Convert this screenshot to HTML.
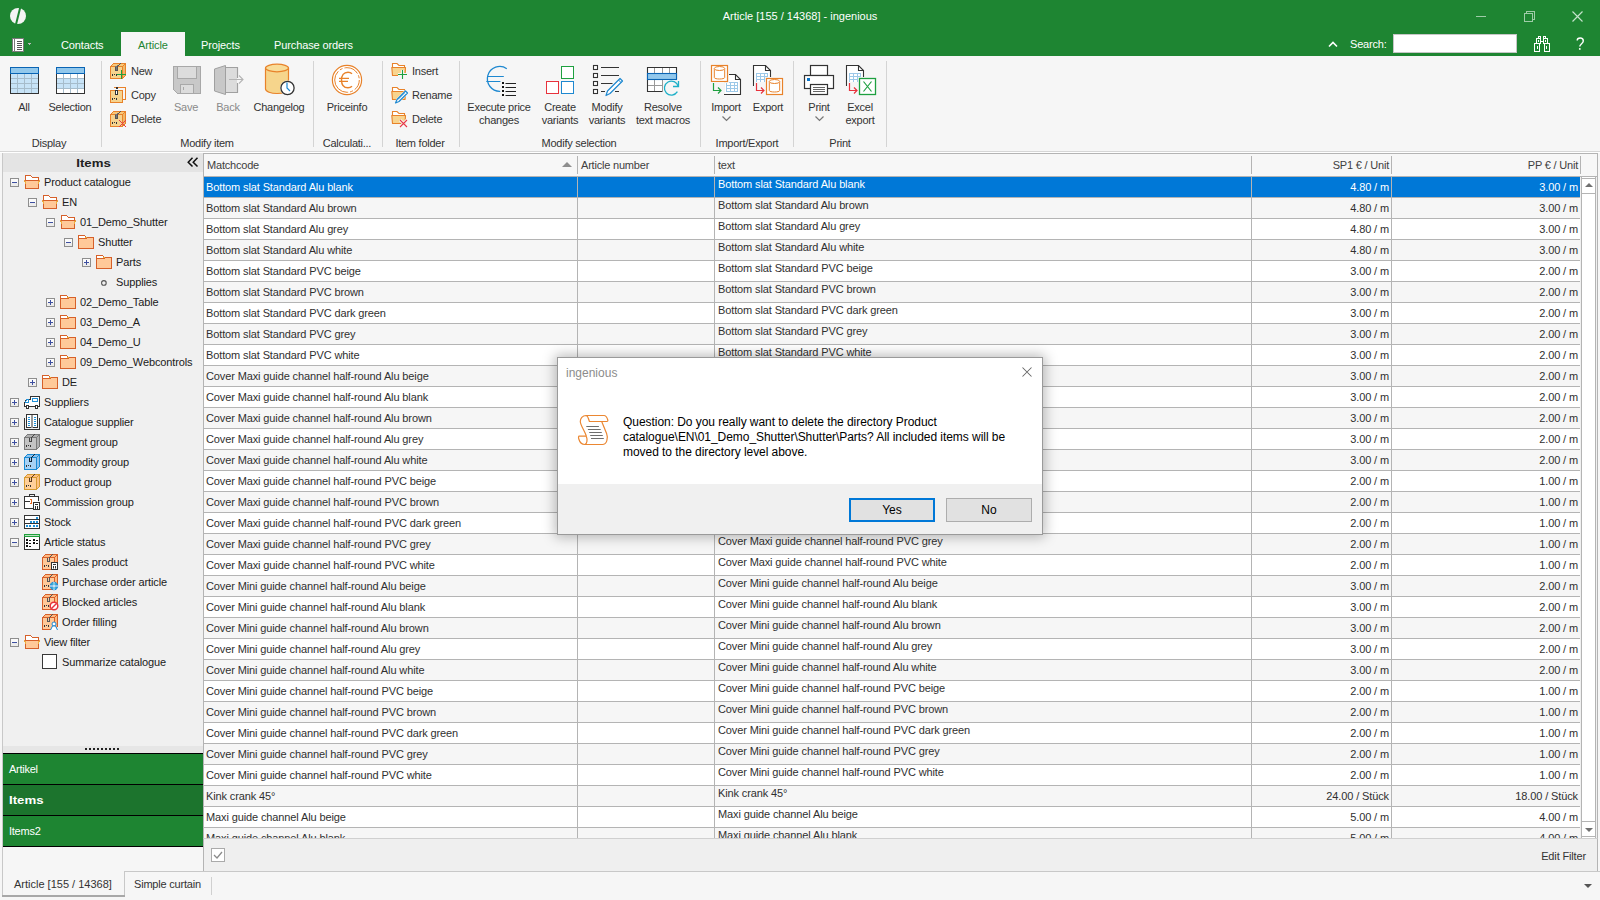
<!DOCTYPE html><html><head><meta charset="utf-8"><style>
html,body{margin:0;padding:0;width:1600px;height:900px;overflow:hidden;background:#f6f6f6;position:relative;font-family:"Liberation Sans",sans-serif}
.t{position:absolute;white-space:nowrap;font-size:11px;line-height:14px;color:#333;letter-spacing:-0.25px}
.w{color:#fff}
.g{color:#8a8a8a}
.k{color:#202020}
svg{overflow:visible}
</style></head><body>
<div style="position:absolute;left:0px;top:0px;width:1600px;height:56px;background:#1e8532"></div>
<svg style="position:absolute;left:8px;top:6px" width="20" height="20" viewBox="0 0 20 20"><circle cx="10" cy="10" r="8" fill="#f4f4f4"/><path d="M11.2 1.5 L13.2 1.8 L9.0 18.6 L7.0 18.3 Z" fill="#1e8532"/></svg>
<div class="t w" style="left:650.0px;width:300px;text-align:center;top:9px;letter-spacing:0">Article [155 / 14368] - ingenious</div>
<div style="position:absolute;left:1476px;top:16px;width:10px;height:1px;background:#9fcca8"></div>
<svg style="position:absolute;left:1524px;top:11px" width="11" height="11" viewBox="0 0 11 11" shape-rendering="crispEdges"><rect x="0.5" y="2.5" width="8" height="8" fill="none" stroke="#9fcca8"/><path d="M2.5 2.5V0.5H10.5V8.5H8.5" fill="none" stroke="#9fcca8"/></svg>
<svg style="position:absolute;left:1572px;top:11px" width="11" height="11" viewBox="0 0 11 11"><path d="M0.5 0.5L10.5 10.5M10.5 0.5L0.5 10.5" stroke="#c4e2cb" stroke-width="1.15"/></svg>
<svg style="position:absolute;left:12px;top:38px" width="20" height="14" viewBox="0 0 20 14" shape-rendering="crispEdges"><rect x="0.5" y="0.5" width="11" height="13" fill="#fff" stroke="#7a7a7a"/><rect x="2" y="1" width="1" height="12" fill="#7a7a7a"/><path d="M5 3h5M5 5h5M5 7h5M5 9h5M5 11h5" stroke="#555" stroke-width="1"/><path d="M15 5h4l-2 2z" fill="#bbb"/></svg>
<div style="position:absolute;left:121px;top:32px;width:64px;height:24px;background:#f6f6f6"></div>
<div class="t w" style="left:61px;top:38px;letter-spacing:-0.12px">Contacts</div>
<div class="t " style="left:138px;top:38px;color:#1e8532;letter-spacing:-0.12px">Article</div>
<div class="t w" style="left:201px;top:38px;letter-spacing:-0.12px">Projects</div>
<div class="t w" style="left:274px;top:38px;letter-spacing:-0.12px">Purchase orders</div>
<svg style="position:absolute;left:1328px;top:41px" width="10" height="6" viewBox="0 0 10 6"><path d="M1 5.5L5 1.5L9 5.5" fill="none" stroke="#fff" stroke-width="1.6"/></svg>
<div class="t w" style="left:1350px;top:37px;letter-spacing:-0.2px">Search:</div>
<div style="position:absolute;left:1393px;top:34px;width:124px;height:19px;background:#fff;box-sizing:border-box;border:1px solid #c6c6c6"></div>
<svg style="position:absolute;left:1534px;top:36px" width="16" height="16" viewBox="0 0 16 16" shape-rendering="crispEdges"><g fill="none" stroke="#fff"><rect x="4.5" y="0.5" width="2" height="2"/><rect x="9.5" y="0.5" width="2" height="2"/><rect x="2.5" y="2.5" width="4" height="5"/><rect x="9.5" y="2.5" width="4" height="5"/><rect x="0.5" y="7.5" width="5" height="8"/><rect x="10.5" y="7.5" width="5" height="8"/></g><g fill="#fff"><rect x="4" y="4" width="1" height="2"/><rect x="11" y="4" width="1" height="2"/><rect x="3" y="10" width="1" height="3"/><rect x="12" y="10" width="1" height="3"/><rect x="7" y="5" width="2" height="1"/></g></svg>
<svg style="position:absolute;left:1570px;top:34px" width="20" height="20" viewBox="1570 34 20 20"><path d="M1577.2 40.6 C1577.2 38.6 1578.6 38 1580.2 38 C1582 38 1583.3 39.2 1583.3 41 C1583.3 43.6 1579.8 43.8 1579.8 46.6" fill="none" stroke="#fff" stroke-width="1.4"/><circle cx="1579.8" cy="48.9" r="0.95" fill="#fff"/></svg>
<div style="position:absolute;left:0px;top:151px;width:1600px;height:1px;background:#d6d6d6"></div>
<div style="position:absolute;left:0px;top:152px;width:1600px;height:1px;background:#ffffff"></div>
<div style="position:absolute;left:101px;top:61px;width:1px;height:86px;background:#d4d4d4"></div>
<div style="position:absolute;left:313px;top:61px;width:1px;height:86px;background:#d4d4d4"></div>
<div style="position:absolute;left:382px;top:61px;width:1px;height:86px;background:#d4d4d4"></div>
<div style="position:absolute;left:459px;top:61px;width:1px;height:86px;background:#d4d4d4"></div>
<div style="position:absolute;left:700px;top:61px;width:1px;height:86px;background:#d4d4d4"></div>
<div style="position:absolute;left:793px;top:61px;width:1px;height:86px;background:#d4d4d4"></div>
<div style="position:absolute;left:886px;top:61px;width:1px;height:86px;background:#d4d4d4"></div>
<div class="t " style="left:-51.0px;width:200px;text-align:center;top:136px;">Display</div>
<div class="t " style="left:107.0px;width:200px;text-align:center;top:136px;">Modify item</div>
<div class="t " style="left:247.0px;width:200px;text-align:center;top:136px;">Calculati...</div>
<div class="t " style="left:320.0px;width:200px;text-align:center;top:136px;">Item folder</div>
<div class="t " style="left:479.0px;width:200px;text-align:center;top:136px;">Modify selection</div>
<div class="t " style="left:647.0px;width:200px;text-align:center;top:136px;">Import/Export</div>
<div class="t " style="left:740.0px;width:200px;text-align:center;top:136px;">Print</div>
<div class="t " style="left:-76.0px;width:200px;text-align:center;top:100px;">All</div>
<div class="t " style="left:-30.0px;width:200px;text-align:center;top:100px;">Selection</div>
<div class="t g" style="left:86.0px;width:200px;text-align:center;top:100px;">Save</div>
<div class="t g" style="left:128.0px;width:200px;text-align:center;top:100px;">Back</div>
<div class="t " style="left:179.0px;width:200px;text-align:center;top:100px;">Changelog</div>
<div class="t " style="left:247.0px;width:200px;text-align:center;top:100px;">Priceinfo</div>
<div class="t " style="left:399.0px;width:200px;text-align:center;top:100px;">Execute price</div>
<div class="t " style="left:399.0px;width:200px;text-align:center;top:113px;">changes</div>
<div class="t " style="left:460.0px;width:200px;text-align:center;top:100px;">Create</div>
<div class="t " style="left:460.0px;width:200px;text-align:center;top:113px;">variants</div>
<div class="t " style="left:507.0px;width:200px;text-align:center;top:100px;">Modify</div>
<div class="t " style="left:507.0px;width:200px;text-align:center;top:113px;">variants</div>
<div class="t " style="left:563.0px;width:200px;text-align:center;top:100px;">Resolve</div>
<div class="t " style="left:563.0px;width:200px;text-align:center;top:113px;">text macros</div>
<div class="t " style="left:626.0px;width:200px;text-align:center;top:100px;">Import</div>
<div class="t " style="left:668.0px;width:200px;text-align:center;top:100px;">Export</div>
<div class="t " style="left:719.0px;width:200px;text-align:center;top:100px;">Print</div>
<div class="t " style="left:760.0px;width:200px;text-align:center;top:100px;">Excel</div>
<div class="t " style="left:760.0px;width:200px;text-align:center;top:113px;">export</div>
<svg style="position:absolute;left:722px;top:116px" width="9" height="5" viewBox="0 0 9 5"><path d="M0.5 0.5L4.5 4.5L8.5 0.5" fill="none" stroke="#777" stroke-width="1.2"/></svg>
<svg style="position:absolute;left:815px;top:116px" width="9" height="5" viewBox="0 0 9 5"><path d="M0.5 0.5L4.5 4.5L8.5 0.5" fill="none" stroke="#777" stroke-width="1.2"/></svg>
<div class="t " style="left:131px;top:64px;">New</div>
<div class="t " style="left:131px;top:88px;">Copy</div>
<div class="t " style="left:131px;top:112px;">Delete</div>
<div class="t " style="left:412px;top:64px;">Insert</div>
<div class="t " style="left:412px;top:88px;">Rename</div>
<div class="t " style="left:412px;top:112px;">Delete</div>
<svg style="position:absolute;left:10px;top:67px" width="29" height="27" viewBox="0 0 29 27" shape-rendering="crispEdges"><rect x="0.5" y="0.5" width="28" height="26" fill="#fff" stroke="#333"/><rect x="1" y="7" width="27" height="4" fill="#c7e3f7"/><rect x="1" y="11" width="27" height="5" fill="#c7e3f7"/><rect x="1" y="16" width="27" height="5" fill="#c7e3f7"/><rect x="1" y="21" width="27" height="5" fill="#c7e3f7"/><path d="M7.5 7V26M14.5 7V26M21.5 7V26M1 11.5H28M1 16.5H28M1 21.5H28" stroke="#a6bccb" stroke-width="1"/><path d="M0.5 6.5V26.5H28.5V6.5" fill="none" stroke="#333"/><rect x="0.5" y="0.5" width="28" height="6" fill="#92c8ec" stroke="#0a64b4"/></svg>
<svg style="position:absolute;left:56px;top:67px" width="29" height="27" viewBox="0 0 29 27" shape-rendering="crispEdges"><rect x="0.5" y="0.5" width="28" height="26" fill="#fff" stroke="#333"/><rect x="1" y="11" width="27" height="5" fill="#c7e3f7"/><rect x="1" y="16" width="27" height="5" fill="#c7e3f7"/><path d="M7.5 7V26M14.5 7V26M21.5 7V26M1 11.5H28M1 16.5H28M1 21.5H28" stroke="#a6bccb" stroke-width="1"/><path d="M0.5 6.5V26.5H28.5V6.5" fill="none" stroke="#333"/><rect x="0.5" y="0.5" width="28" height="6" fill="#92c8ec" stroke="#0a64b4"/></svg>
<svg style="position:absolute;left:110px;top:63px" width="16" height="16" viewBox="0 0 16 16" shape-rendering="crispEdges"><path d="M0.5 3.5L3.5 0.5H15.5L12.5 3.5Z" fill="#f8c87a" stroke="#e8822a"/><path d="M12.5 3.5L15.5 0.5V12.5L12.5 15.5Z" fill="#f0b868" stroke="#e8822a"/><rect x="0.5" y="3.5" width="12" height="12" fill="#f6d38e" stroke="#e8822a"/><path d="M5.5 3.5V7.5H7.5V3.5L10.5 0.5" fill="#777" stroke="#555"/><path d="M2.5 11v2M4.5 10.5v1M6.5 11v2" stroke="#333"/><rect x="7" y="7" width="10" height="10" fill="#f6f6f6" opacity="0"/><path d="M7 11.5H16M11.5 7V16" stroke="#1ea040" stroke-width="1.1"/></svg>
<svg style="position:absolute;left:110px;top:87px" width="16" height="16" viewBox="0 0 16 16" shape-rendering="crispEdges"><path d="M3.5 0.5H15.5V12.5H13" fill="none" stroke="#e8822a"/><rect x="0.5" y="3.5" width="12" height="12" fill="#f6d38e" stroke="#e8822a"/><rect x="5.5" y="3.5" width="2" height="4" fill="#fff" stroke="#333"/><rect x="6" y="0" width="2" height="2" fill="#333"/><path d="M2.5 11v2M4.5 10.5v1M6.5 11v2" stroke="#333"/></svg>
<svg style="position:absolute;left:110px;top:111px" width="16" height="16" viewBox="0 0 16 16" shape-rendering="crispEdges"><path d="M0.5 3.5L3.5 0.5H15.5L12.5 3.5Z" fill="#f8c87a" stroke="#e8822a"/><path d="M12.5 3.5L15.5 0.5V12.5L12.5 15.5Z" fill="#f0b868" stroke="#e8822a"/><rect x="0.5" y="3.5" width="12" height="12" fill="#f6d38e" stroke="#e8822a"/><path d="M5.5 3.5V7.5H7.5V3.5L10.5 0.5" fill="#777" stroke="#555"/><path d="M2.5 11v2M4.5 10.5v1M6.5 11v2" stroke="#333"/><path d="M9 9L16 16M16 9L9 16" stroke="#e83a48" stroke-width="1.1"/></svg>
<svg style="position:absolute;left:173px;top:66px" width="28" height="28" viewBox="0 0 28 28" shape-rendering="crispEdges"><path d="M0.5 0.5H27.5V27.5H4.5L0.5 23.5Z" fill="#c8c8c8" stroke="#a8a8a8"/><rect x="4.5" y="0.5" width="19" height="12" fill="#dcdcdc" stroke="#a8a8a8"/><rect x="7.5" y="18.5" width="13" height="9" fill="#dcdcdc" stroke="#a8a8a8"/><path d="M10.5 21v3" stroke="#a8a8a8"/></svg>
<svg style="position:absolute;left:213px;top:64px" width="32" height="32" viewBox="0 0 32 32"><path d="M1.5 5 L12.5 1.5 V30.5 L1.5 27 Z" fill="#c8c8c8" stroke="#a0a0a0" stroke-width="1"/><path d="M13 3.5H24.5V14M24.5 19V28.5H13" fill="#dcdcdc" stroke="#a0a0a0" stroke-width="1.1"/><rect x="13" y="4" width="11" height="24" fill="#dcdcdc"/><path d="M24.5 3.5V14M24.5 19V28.5" stroke="#a0a0a0" stroke-width="1.1"/><path d="M13 3.5H24.5M13 28.5H24.5" stroke="#a0a0a0" stroke-width="1.1"/><path d="M16 15.5H30M26 11.5L30 15.5L26 19.5" fill="none" stroke="#b4b4b4" stroke-width="1.1"/></svg>
<svg style="position:absolute;left:264px;top:63px" width="34" height="34" viewBox="0 0 34 34"><path d="M1.5 5 V26 C1.5 28.5 7 30.5 13 30.5 C19 30.5 24.5 28.5 24.5 26 V5" fill="#f6d58c" stroke="#e8822a" stroke-width="1.2"/><ellipse cx="13" cy="5" rx="11.5" ry="3.8" fill="#f8dc98" stroke="#e8822a" stroke-width="1.2"/><circle cx="23.5" cy="25" r="7.5" fill="#f6f6f6"/><circle cx="23.5" cy="25" r="6.6" fill="#fff" stroke="#333" stroke-width="1.3"/><path d="M23 19.5V25L26 28" fill="none" stroke="#1e88d0" stroke-width="1.2"/></svg>
<svg style="position:absolute;left:331px;top:64px" width="32" height="32" viewBox="0 0 32 32"><circle cx="16" cy="16" r="14.6" fill="#fff" stroke="#e8822a" stroke-width="1.2"/><circle cx="16" cy="16" r="12.3" fill="none" stroke="#e8822a" stroke-width="1" stroke-dasharray="15 2 3 2 30 2 3 2" stroke-dashoffset="4"/><path d="M21 9.8 C19.8 8.6 18.4 8.2 17 8.2 C12.6 8.2 10.5 11.6 10.5 16 C10.5 20.4 12.6 23.8 17 23.8 C18.4 23.8 19.8 23.4 21 22.2" fill="none" stroke="#e8822a" stroke-width="1.4"/><path d="M8 14.4H18M8 17.4H17" stroke="#e8822a" stroke-width="1.2"/></svg>
<svg style="position:absolute;left:391px;top:62px" width="18" height="18" viewBox="0 0 18 18"><path d="M1.5 6V1.5H6L8 3.5H13.5V6" fill="#fff" stroke="#e8822a" stroke-width="1.1"/><path d="M0.8 5.5H14.5L14 13.5H1.5Z" fill="#f8d48e" stroke="#e8822a" stroke-width="1.1" stroke-linejoin="round"/><path d="M7 12.5H16M11.5 8V17" stroke="#f6f6f6" stroke-width="3"/><path d="M7 12.5H16M11.5 8V17" stroke="#1ea040" stroke-width="1.1"/></svg>
<svg style="position:absolute;left:391px;top:86px" width="18" height="18" viewBox="0 0 18 18"><path d="M1.5 6V1.5H6L8 3.5H13.5V6" fill="#fff" stroke="#e8822a" stroke-width="1.1"/><path d="M0.8 5.5H14.5L14 13.5H1.5Z" fill="#f8d48e" stroke="#e8822a" stroke-width="1.1" stroke-linejoin="round"/><path d="M4.5 17 L6 13.5 L14.5 5 L16.5 7 L8 15.5 Z" fill="#f6f6f6" stroke="#f6f6f6" stroke-width="2"/><path d="M4.5 17 L6 13.5 L14.5 5 L16.5 7 L8 15.5 Z" fill="#fff" stroke="#1e88d0" stroke-width="1.2" stroke-linejoin="round"/><path d="M7 13.5L13.5 7" stroke="#1e88d0" stroke-width="0.8"/></svg>
<svg style="position:absolute;left:391px;top:110px" width="18" height="18" viewBox="0 0 18 18"><path d="M1.5 6V1.5H6L8 3.5H13.5V6" fill="#fff" stroke="#e8822a" stroke-width="1.1"/><path d="M0.8 5.5H14.5L14 13.5H1.5Z" fill="#f8d48e" stroke="#e8822a" stroke-width="1.1" stroke-linejoin="round"/><path d="M9 10L16 17M16 10L9 17" stroke="#f6f6f6" stroke-width="3"/><path d="M9 10L16 17M16 10L9 17" stroke="#e83a48" stroke-width="1.1"/></svg>
<svg style="position:absolute;left:482px;top:60px" width="40" height="40" viewBox="0 0 40 40"><path d="M24.8 8.7 A12.4 12.4 0 1 0 18.2 31.3" fill="none" stroke="#1e88d0" stroke-width="1.3"/><path d="M5.2 16.5H21.8M4.3 21.5H18.4" stroke="#1e88d0" stroke-width="1.2"/><rect x="19" y="21" width="17" height="16" fill="#f6f6f6"/><path d="M20 23h2M20 27h2M20 31h2M20 35h2" stroke="#111" stroke-width="2"/><path d="M23.5 23.5H34M23.5 27.5H34M23.5 31.5H34M23.5 35.5H34" stroke="#222" stroke-width="1.1"/></svg>
<svg style="position:absolute;left:546px;top:66px" width="29" height="29" viewBox="0 0 29 29" shape-rendering="crispEdges"><rect x="15.5" y="0.5" width="12" height="12" fill="#fff" stroke="#1ea040" stroke-width="1"/><rect x="0.5" y="15.5" width="12" height="12" fill="#fff" stroke="#e8323c"/><rect x="15.5" y="15.5" width="12" height="12" fill="#fff" stroke="#1e88d0"/></svg>
<svg style="position:absolute;left:588px;top:60px" width="40" height="40" viewBox="0 0 40 40"><g fill="#fff" stroke="#333" stroke-width="1.1"><rect x="5.5" y="5.5" width="4" height="4"/><rect x="5.5" y="13.5" width="4" height="4"/><rect x="5.5" y="21.5" width="4" height="4"/><rect x="5.5" y="29.5" width="4" height="4"/></g><path d="M13 7.5H31M13 15.5H31M13 23.5H24.5M13 31.5H17M27 31.5H31" stroke="#333" stroke-width="1.1"/><path d="M18 35.5 L19.5 31 L32 18.5 L34.5 21 L22 33.5 Z" fill="#fff" stroke="#1e88d0" stroke-width="1.2" stroke-linejoin="round"/><path d="M30.5 20L33 22.5" stroke="#1e88d0"/></svg>
<svg style="position:absolute;left:642px;top:60px" width="40" height="40" viewBox="0 0 40 40"><path d="M20.5 31.5H5.5V7.5H34.5V19" fill="#fff" stroke="#333" stroke-width="1.1"/><path d="M12.5 8V13M20.5 8V13M27.5 8V13M12.5 20V31M20.5 20V31M6 25.5H20.5" stroke="#999" stroke-width="1"/><rect x="5.5" y="13.5" width="29" height="6" fill="#92c8ec" stroke="#0a64b4" stroke-width="1.1"/><rect x="21" y="21" width="16" height="16" fill="#f6f6f6"/><path d="M35.4 31.7 A7 7 0 1 1 36.2 26.4" fill="none" stroke="#1eb0c8" stroke-width="1.3"/><path d="M36.5 21V26.5H31" fill="none" stroke="#1eb0c8" stroke-width="1.3"/></svg>
<svg style="position:absolute;left:706px;top:60px" width="40" height="40" viewBox="0 0 40 40"><path d="M17.5 14.5H29.5L34.5 19.5V34.5H17.5Z" fill="#fff" stroke="#333" stroke-width="1.1"/><path d="M29.5 14.5V19.5H34.5" fill="none" stroke="#333" stroke-width="1.1"/><rect x="20" y="22" width="12" height="10" fill="#fff"/><path d="M20 22.5H32M20 25.5H32M20 28.5H32M20 31.5H32M20.5 22V32M24.5 22V32M28.5 22V32M31.5 22V32" stroke="#9cc8e8" stroke-width="1"/><rect x="4" y="4" width="19" height="19" fill="#f6f6f6"/><rect x="5.5" y="5.5" width="16" height="16" fill="#fff" stroke="#e8822a" stroke-width="1.2"/><path d="M8.3 8.5V17.5C8.3 19.5 18.7 19.5 18.7 17.5V8.5" fill="#fff" stroke="#e8822a" stroke-width="1"/><ellipse cx="13.5" cy="8.5" rx="5.2" ry="2" fill="#fff" stroke="#e8822a" stroke-width="1"/><rect x="4" y="22" width="14" height="13" fill="#f6f6f6"/><path d="M7.5 23V30.5H15" fill="none" stroke="#1ea040" stroke-width="1.2"/><path d="M12 27.5L15 30.5L12 33.5" fill="none" stroke="#1ea040" stroke-width="1.2"/></svg>
<svg style="position:absolute;left:706px;top:60px" width="80" height="40" viewBox="0 0 80 40"><path d="M47.5 5.5H59.5L64.5 10.5V25.5H47.5Z" fill="#fff" stroke="#333" stroke-width="1.1"/><path d="M59.5 5.5V10.5H64.5" fill="none" stroke="#333" stroke-width="1.1"/><rect x="50" y="13" width="12" height="10" fill="#fff"/><path d="M50 13.5H62M50 16.5H62M50 19.5H62M50 22.5H62M50.5 13V23M54.5 13V23M58.5 13V23M61.5 13V23" stroke="#9cc8e8" stroke-width="1"/><rect x="59" y="17" width="19" height="19" fill="#f6f6f6"/><rect x="60.5" y="18.5" width="16" height="16" fill="#fff" stroke="#e8822a" stroke-width="1.2"/><path d="M63.3 21.5V30.5C63.3 32.5 73.7 32.5 73.7 30.5V21.5" fill="#fff" stroke="#e8822a" stroke-width="1"/><ellipse cx="68.5" cy="21.5" rx="5.2" ry="2" fill="#fff" stroke="#e8822a" stroke-width="1"/><rect x="48" y="22" width="11" height="13" fill="#f6f6f6"/><path d="M50.5 23V30.5H58" fill="none" stroke="#e8323c" stroke-width="1.2"/><path d="M55 27.5L58 30.5L55 33.5" fill="none" stroke="#e8323c" stroke-width="1.2"/></svg>
<svg style="position:absolute;left:800px;top:60px" width="40" height="40" viewBox="0 0 40 40"><rect x="10.5" y="5.5" width="17" height="10" fill="#fff" stroke="#333" stroke-width="1.2"/><rect x="4.5" y="15.5" width="29" height="13" fill="#fff" stroke="#333" stroke-width="1.2"/><rect x="10.5" y="24.5" width="17" height="10" fill="#fff" stroke="#333" stroke-width="1.2"/><path d="M13 27.5H25M13 29.5H25M13 31.5H25" stroke="#555" stroke-width="0.9"/><rect x="7" y="18" width="3" height="3" fill="#0a74c8"/></svg>
<svg style="position:absolute;left:800px;top:60px" width="80" height="40" viewBox="0 0 80 40"><path d="M46.5 5.5H58.5L63.5 10.5V25.5H46.5Z" fill="#fff" stroke="#333" stroke-width="1.1"/><path d="M58.5 5.5V10.5H63.5" fill="none" stroke="#333" stroke-width="1.1"/><rect x="49" y="13" width="12" height="10" fill="#fff"/><path d="M49 13.5H61M49 16.5H61M49 19.5H61M49 22.5H61M49.5 13V23M53.5 13V23M57.5 13V23M60.5 13V23" stroke="#9cc8e8" stroke-width="1"/><rect x="58" y="17" width="19" height="19" fill="#f6f6f6"/><rect x="59.5" y="18.5" width="16" height="16" fill="#fff" stroke="#1ea040" stroke-width="1.3"/><path d="M63.5 21.5L71.5 31.5M71.5 21.5L63.5 31.5" stroke="#1ea040" stroke-width="1.2"/><rect x="47" y="22" width="11" height="13" fill="#f6f6f6"/><path d="M49.5 23V30.5H57" fill="none" stroke="#e8323c" stroke-width="1.2"/><path d="M54 27.5L57 30.5L54 33.5" fill="none" stroke="#e8323c" stroke-width="1.2"/></svg>
<div style="position:absolute;left:2px;top:153px;width:201px;height:718px;background:#f0f0f0;border-left:1px solid #c8c8c8;box-sizing:border-box"></div>
<div style="position:absolute;left:3px;top:153px;width:200px;height:19px;background:#e4e4e4"></div>
<div class="t" style="left:3px;width:181px;text-align:center;top:156px;font-weight:bold;color:#202020;letter-spacing:0;transform:scaleX(1.2)">Items</div>
<svg style="position:absolute;left:187px;top:157px" width="12" height="11" viewBox="0 0 12 11"><path d="M5.5 0.8L1.2 5.2L5.5 9.6M10.5 0.8L6.2 5.2L10.5 9.6" fill="none" stroke="#111" stroke-width="1.5"/></svg>
<svg style="position:absolute;left:10px;top:178px" width="9" height="9" viewBox="0 0 9 9" shape-rendering="crispEdges"><rect x="0.5" y="0.5" width="8" height="8" rx="1" fill="#fafafa" stroke="#8e8e8e"/><rect x="1" y="5" width="7" height="3" fill="#ececec"/><path d="M2 4.5h5" stroke="#3d4fa0" stroke-width="1"/></svg>
<svg style="position:absolute;left:24px;top:175px" width="16" height="14" viewBox="0 0 16 14" shape-rendering="crispEdges"><path d="M1.5 5.5V0.5H6.5L8.5 2.5H14.5V5.5" fill="#fff" stroke="#d6602a"/><rect x="1" y="5" width="14" height="9" fill="#ffc999"/><path d="M1.5 5.5H14.5V13.5H1.5Z" fill="none" stroke="#d6602a"/><rect x="0" y="5" width="1" height="2" fill="#e8a040"/><rect x="15" y="5" width="1" height="2" fill="#e8a040"/><rect x="1" y="6" width="1" height="3" fill="#f0b040"/><rect x="14" y="6" width="1" height="3" fill="#f0b040"/></svg>
<div class="t k" style="left:44px;top:175px;letter-spacing:-0.12px">Product catalogue</div>
<svg style="position:absolute;left:28px;top:198px" width="9" height="9" viewBox="0 0 9 9" shape-rendering="crispEdges"><rect x="0.5" y="0.5" width="8" height="8" rx="1" fill="#fafafa" stroke="#8e8e8e"/><rect x="1" y="5" width="7" height="3" fill="#ececec"/><path d="M2 4.5h5" stroke="#3d4fa0" stroke-width="1"/></svg>
<svg style="position:absolute;left:42px;top:195px" width="16" height="14" viewBox="0 0 16 14" shape-rendering="crispEdges"><path d="M1.5 5.5V0.5H6.5L8.5 2.5H14.5V5.5" fill="#fff" stroke="#d6602a"/><rect x="1" y="5" width="14" height="9" fill="#ffc999"/><path d="M1.5 5.5H14.5V13.5H1.5Z" fill="none" stroke="#d6602a"/><rect x="0" y="5" width="1" height="2" fill="#e8a040"/><rect x="15" y="5" width="1" height="2" fill="#e8a040"/><rect x="1" y="6" width="1" height="3" fill="#f0b040"/><rect x="14" y="6" width="1" height="3" fill="#f0b040"/></svg>
<div class="t k" style="left:62px;top:195px;letter-spacing:-0.12px">EN</div>
<svg style="position:absolute;left:46px;top:218px" width="9" height="9" viewBox="0 0 9 9" shape-rendering="crispEdges"><rect x="0.5" y="0.5" width="8" height="8" rx="1" fill="#fafafa" stroke="#8e8e8e"/><rect x="1" y="5" width="7" height="3" fill="#ececec"/><path d="M2 4.5h5" stroke="#3d4fa0" stroke-width="1"/></svg>
<svg style="position:absolute;left:60px;top:215px" width="16" height="14" viewBox="0 0 16 14" shape-rendering="crispEdges"><path d="M1.5 5.5V0.5H6.5L8.5 2.5H14.5V5.5" fill="#fff" stroke="#d6602a"/><rect x="1" y="5" width="14" height="9" fill="#ffc999"/><path d="M1.5 5.5H14.5V13.5H1.5Z" fill="none" stroke="#d6602a"/><rect x="0" y="5" width="1" height="2" fill="#e8a040"/><rect x="15" y="5" width="1" height="2" fill="#e8a040"/><rect x="1" y="6" width="1" height="3" fill="#f0b040"/><rect x="14" y="6" width="1" height="3" fill="#f0b040"/></svg>
<div class="t k" style="left:80px;top:215px;letter-spacing:-0.12px">01_Demo_Shutter</div>
<svg style="position:absolute;left:64px;top:238px" width="9" height="9" viewBox="0 0 9 9" shape-rendering="crispEdges"><rect x="0.5" y="0.5" width="8" height="8" rx="1" fill="#fafafa" stroke="#8e8e8e"/><rect x="1" y="5" width="7" height="3" fill="#ececec"/><path d="M2 4.5h5" stroke="#3d4fa0" stroke-width="1"/></svg>
<svg style="position:absolute;left:78px;top:235px" width="16" height="14" viewBox="0 0 16 14" shape-rendering="crispEdges"><path d="M0.5 13.5V0.5H6.5L8.5 2.5H15.5V13.5Z" fill="#ffc999" stroke="#d6602a"/><rect x="1" y="1" width="6" height="2" fill="#fff"/><path d="M0.5 3.5H8.5" stroke="#d6602a"/><rect x="7" y="2" width="2" height="1" fill="#e8b030"/></svg>
<div class="t k" style="left:98px;top:235px;letter-spacing:-0.12px">Shutter</div>
<svg style="position:absolute;left:82px;top:258px" width="9" height="9" viewBox="0 0 9 9" shape-rendering="crispEdges"><rect x="0.5" y="0.5" width="8" height="8" rx="1" fill="#fafafa" stroke="#8e8e8e"/><rect x="1" y="5" width="7" height="3" fill="#ececec"/><path d="M2 4.5h5" stroke="#3d4fa0" stroke-width="1"/><path d="M4.5 2v5" stroke="#3d4fa0" stroke-width="1"/></svg>
<svg style="position:absolute;left:96px;top:255px" width="16" height="14" viewBox="0 0 16 14" shape-rendering="crispEdges"><path d="M0.5 13.5V0.5H6.5L8.5 2.5H15.5V13.5Z" fill="#ffc999" stroke="#d6602a"/><rect x="1" y="1" width="6" height="2" fill="#fff"/><path d="M0.5 3.5H8.5" stroke="#d6602a"/><rect x="7" y="2" width="2" height="1" fill="#e8b030"/></svg>
<div class="t k" style="left:116px;top:255px;letter-spacing:-0.12px">Parts</div>
<svg style="position:absolute;left:101px;top:280px" width="7" height="7" viewBox="0 0 7 7"><circle cx="2.9" cy="2.9" r="2.3" fill="none" stroke="#555" stroke-width="1.1"/></svg>
<div class="t k" style="left:116px;top:275px;letter-spacing:-0.12px">Supplies</div>
<svg style="position:absolute;left:46px;top:298px" width="9" height="9" viewBox="0 0 9 9" shape-rendering="crispEdges"><rect x="0.5" y="0.5" width="8" height="8" rx="1" fill="#fafafa" stroke="#8e8e8e"/><rect x="1" y="5" width="7" height="3" fill="#ececec"/><path d="M2 4.5h5" stroke="#3d4fa0" stroke-width="1"/><path d="M4.5 2v5" stroke="#3d4fa0" stroke-width="1"/></svg>
<svg style="position:absolute;left:60px;top:295px" width="16" height="14" viewBox="0 0 16 14" shape-rendering="crispEdges"><path d="M0.5 13.5V0.5H6.5L8.5 2.5H15.5V13.5Z" fill="#ffc999" stroke="#d6602a"/><rect x="1" y="1" width="6" height="2" fill="#fff"/><path d="M0.5 3.5H8.5" stroke="#d6602a"/><rect x="7" y="2" width="2" height="1" fill="#e8b030"/></svg>
<div class="t k" style="left:80px;top:295px;letter-spacing:-0.12px">02_Demo_Table</div>
<svg style="position:absolute;left:46px;top:318px" width="9" height="9" viewBox="0 0 9 9" shape-rendering="crispEdges"><rect x="0.5" y="0.5" width="8" height="8" rx="1" fill="#fafafa" stroke="#8e8e8e"/><rect x="1" y="5" width="7" height="3" fill="#ececec"/><path d="M2 4.5h5" stroke="#3d4fa0" stroke-width="1"/><path d="M4.5 2v5" stroke="#3d4fa0" stroke-width="1"/></svg>
<svg style="position:absolute;left:60px;top:315px" width="16" height="14" viewBox="0 0 16 14" shape-rendering="crispEdges"><path d="M0.5 13.5V0.5H6.5L8.5 2.5H15.5V13.5Z" fill="#ffc999" stroke="#d6602a"/><rect x="1" y="1" width="6" height="2" fill="#fff"/><path d="M0.5 3.5H8.5" stroke="#d6602a"/><rect x="7" y="2" width="2" height="1" fill="#e8b030"/></svg>
<div class="t k" style="left:80px;top:315px;letter-spacing:-0.12px">03_Demo_A</div>
<svg style="position:absolute;left:46px;top:338px" width="9" height="9" viewBox="0 0 9 9" shape-rendering="crispEdges"><rect x="0.5" y="0.5" width="8" height="8" rx="1" fill="#fafafa" stroke="#8e8e8e"/><rect x="1" y="5" width="7" height="3" fill="#ececec"/><path d="M2 4.5h5" stroke="#3d4fa0" stroke-width="1"/><path d="M4.5 2v5" stroke="#3d4fa0" stroke-width="1"/></svg>
<svg style="position:absolute;left:60px;top:335px" width="16" height="14" viewBox="0 0 16 14" shape-rendering="crispEdges"><path d="M0.5 13.5V0.5H6.5L8.5 2.5H15.5V13.5Z" fill="#ffc999" stroke="#d6602a"/><rect x="1" y="1" width="6" height="2" fill="#fff"/><path d="M0.5 3.5H8.5" stroke="#d6602a"/><rect x="7" y="2" width="2" height="1" fill="#e8b030"/></svg>
<div class="t k" style="left:80px;top:335px;letter-spacing:-0.12px">04_Demo_U</div>
<svg style="position:absolute;left:46px;top:358px" width="9" height="9" viewBox="0 0 9 9" shape-rendering="crispEdges"><rect x="0.5" y="0.5" width="8" height="8" rx="1" fill="#fafafa" stroke="#8e8e8e"/><rect x="1" y="5" width="7" height="3" fill="#ececec"/><path d="M2 4.5h5" stroke="#3d4fa0" stroke-width="1"/><path d="M4.5 2v5" stroke="#3d4fa0" stroke-width="1"/></svg>
<svg style="position:absolute;left:60px;top:355px" width="16" height="14" viewBox="0 0 16 14" shape-rendering="crispEdges"><path d="M0.5 13.5V0.5H6.5L8.5 2.5H15.5V13.5Z" fill="#ffc999" stroke="#d6602a"/><rect x="1" y="1" width="6" height="2" fill="#fff"/><path d="M0.5 3.5H8.5" stroke="#d6602a"/><rect x="7" y="2" width="2" height="1" fill="#e8b030"/></svg>
<div class="t k" style="left:80px;top:355px;letter-spacing:-0.12px">09_Demo_Webcontrols</div>
<svg style="position:absolute;left:28px;top:378px" width="9" height="9" viewBox="0 0 9 9" shape-rendering="crispEdges"><rect x="0.5" y="0.5" width="8" height="8" rx="1" fill="#fafafa" stroke="#8e8e8e"/><rect x="1" y="5" width="7" height="3" fill="#ececec"/><path d="M2 4.5h5" stroke="#3d4fa0" stroke-width="1"/><path d="M4.5 2v5" stroke="#3d4fa0" stroke-width="1"/></svg>
<svg style="position:absolute;left:42px;top:375px" width="16" height="14" viewBox="0 0 16 14" shape-rendering="crispEdges"><path d="M0.5 13.5V0.5H6.5L8.5 2.5H15.5V13.5Z" fill="#ffc999" stroke="#d6602a"/><rect x="1" y="1" width="6" height="2" fill="#fff"/><path d="M0.5 3.5H8.5" stroke="#d6602a"/><rect x="7" y="2" width="2" height="1" fill="#e8b030"/></svg>
<div class="t k" style="left:62px;top:375px;letter-spacing:-0.12px">DE</div>
<svg style="position:absolute;left:10px;top:398px" width="9" height="9" viewBox="0 0 9 9" shape-rendering="crispEdges"><rect x="0.5" y="0.5" width="8" height="8" rx="1" fill="#fafafa" stroke="#8e8e8e"/><rect x="1" y="5" width="7" height="3" fill="#ececec"/><path d="M2 4.5h5" stroke="#3d4fa0" stroke-width="1"/><path d="M4.5 2v5" stroke="#3d4fa0" stroke-width="1"/></svg>
<svg style="position:absolute;left:24px;top:395px" width="16" height="14" viewBox="0 0 16 14" shape-rendering="crispEdges"><rect x="6.5" y="1.5" width="9" height="10" rx="1" fill="#fff" stroke="#333"/><rect x="8.5" y="3.5" width="5" height="3" fill="none" stroke="#1e90d8"/><path d="M6.5 4.5H2.5L0.5 8V11.5H6.5" fill="#fff" stroke="#333"/><path d="M1.5 7.5L2.5 4.5H4.5V7.5Z" fill="none" stroke="#1e90d8"/><circle cx="3.5" cy="12" r="1.5" fill="#fff" stroke="#333"/><circle cx="12.5" cy="12" r="1.5" fill="#fff" stroke="#333"/></svg>
<div class="t k" style="left:44px;top:395px;letter-spacing:-0.12px">Suppliers</div>
<svg style="position:absolute;left:10px;top:418px" width="9" height="9" viewBox="0 0 9 9" shape-rendering="crispEdges"><rect x="0.5" y="0.5" width="8" height="8" rx="1" fill="#fafafa" stroke="#8e8e8e"/><rect x="1" y="5" width="7" height="3" fill="#ececec"/><path d="M2 4.5h5" stroke="#3d4fa0" stroke-width="1"/><path d="M4.5 2v5" stroke="#3d4fa0" stroke-width="1"/></svg>
<svg style="position:absolute;left:24px;top:414px" width="16" height="16" viewBox="0 0 16 16" shape-rendering="crispEdges"><path d="M0.5 3.5V15.5H15.5V3.5" fill="none" stroke="#333"/><rect x="2.5" y="0.5" width="11" height="13" fill="#fff" stroke="#333"/><path d="M8 1V14" stroke="#999" stroke-width="2"/><path d="M4 3h2M4 5h2M4 7h2M4 9h2M4 11h2M10 3h2M10 5h2M10 7h2M10 9h2M10 11h2" stroke="#1e90d8"/></svg>
<div class="t k" style="left:44px;top:415px;letter-spacing:-0.12px">Catalogue supplier</div>
<svg style="position:absolute;left:10px;top:438px" width="9" height="9" viewBox="0 0 9 9" shape-rendering="crispEdges"><rect x="0.5" y="0.5" width="8" height="8" rx="1" fill="#fafafa" stroke="#8e8e8e"/><rect x="1" y="5" width="7" height="3" fill="#ececec"/><path d="M2 4.5h5" stroke="#3d4fa0" stroke-width="1"/><path d="M4.5 2v5" stroke="#3d4fa0" stroke-width="1"/></svg>
<svg style="position:absolute;left:24px;top:434px" width="16" height="16" viewBox="0 0 16 16" shape-rendering="crispEdges"><path d="M0.5 3.5L3.5 0.5H15.5L12.5 3.5Z" fill="#b0b0b0" stroke="#7a7a7a"/><path d="M12.5 3.5L15.5 0.5V12.5L12.5 15.5Z" fill="#b0b0b0" stroke="#7a7a7a"/><rect x="0.5" y="3.5" width="12" height="12" fill="#c4c4c4" stroke="#7a7a7a"/><path d="M5.5 3.5V7.5H7.5V3.5L10.5 0.5" fill="none" stroke="#444"/><path d="M2.5 11v2M4.5 10.5v1M6.5 11v2" stroke="#333" stroke-width="1"/></svg>
<div class="t k" style="left:44px;top:435px;letter-spacing:-0.12px">Segment group</div>
<svg style="position:absolute;left:10px;top:458px" width="9" height="9" viewBox="0 0 9 9" shape-rendering="crispEdges"><rect x="0.5" y="0.5" width="8" height="8" rx="1" fill="#fafafa" stroke="#8e8e8e"/><rect x="1" y="5" width="7" height="3" fill="#ececec"/><path d="M2 4.5h5" stroke="#3d4fa0" stroke-width="1"/><path d="M4.5 2v5" stroke="#3d4fa0" stroke-width="1"/></svg>
<svg style="position:absolute;left:24px;top:454px" width="16" height="16" viewBox="0 0 16 16" shape-rendering="crispEdges"><path d="M0.5 3.5L3.5 0.5H15.5L12.5 3.5Z" fill="#8cc2ee" stroke="#1a8ad4"/><path d="M12.5 3.5L15.5 0.5V12.5L12.5 15.5Z" fill="#8cc2ee" stroke="#1a8ad4"/><rect x="0.5" y="3.5" width="12" height="12" fill="#a8d2f4" stroke="#1a8ad4"/><path d="M5.5 3.5V7.5H7.5V3.5L10.5 0.5" fill="none" stroke="#123"/><path d="M2.5 11v2M4.5 10.5v1M6.5 11v2" stroke="#333" stroke-width="1"/></svg>
<div class="t k" style="left:44px;top:455px;letter-spacing:-0.12px">Commodity group</div>
<svg style="position:absolute;left:10px;top:478px" width="9" height="9" viewBox="0 0 9 9" shape-rendering="crispEdges"><rect x="0.5" y="0.5" width="8" height="8" rx="1" fill="#fafafa" stroke="#8e8e8e"/><rect x="1" y="5" width="7" height="3" fill="#ececec"/><path d="M2 4.5h5" stroke="#3d4fa0" stroke-width="1"/><path d="M4.5 2v5" stroke="#3d4fa0" stroke-width="1"/></svg>
<svg style="position:absolute;left:24px;top:474px" width="16" height="16" viewBox="0 0 16 16" shape-rendering="crispEdges"><path d="M0.5 3.5L3.5 0.5H15.5L12.5 3.5Z" fill="#ffc080" stroke="#d69a30"/><path d="M12.5 3.5L15.5 0.5V12.5L12.5 15.5Z" fill="#ffc080" stroke="#d69a30"/><rect x="0.5" y="3.5" width="12" height="12" fill="#ffd09a" stroke="#d69a30"/><path d="M5.5 3.5V7.5H7.5V3.5L10.5 0.5" fill="none" stroke="#5a3a20"/><path d="M2.5 11v2M4.5 10.5v1M6.5 11v2" stroke="#333" stroke-width="1"/></svg>
<div class="t k" style="left:44px;top:475px;letter-spacing:-0.12px">Product group</div>
<svg style="position:absolute;left:10px;top:498px" width="9" height="9" viewBox="0 0 9 9" shape-rendering="crispEdges"><rect x="0.5" y="0.5" width="8" height="8" rx="1" fill="#fafafa" stroke="#8e8e8e"/><rect x="1" y="5" width="7" height="3" fill="#ececec"/><path d="M2 4.5h5" stroke="#3d4fa0" stroke-width="1"/><path d="M4.5 2v5" stroke="#3d4fa0" stroke-width="1"/></svg>
<svg style="position:absolute;left:24px;top:494px" width="16" height="16" viewBox="0 0 16 16" shape-rendering="crispEdges"><path d="M5.5 2.5V0.5H10.5V2.5" fill="none" stroke="#333"/><path d="M9 14.5H0.5V2.5H14.5V7" fill="#fff" stroke="#333"/><path d="M0.5 7.5H6" stroke="#333"/><path d="M6 5.5h1.5v4H6" fill="none" stroke="#e86a20"/><rect x="9.5" y="8.5" width="6" height="7" fill="#fff" stroke="#333"/><path d="M11 10.5h3" stroke="#333"/><path d="M11.5 12v2.5M13.5 12v2.5" stroke="#333"/></svg>
<div class="t k" style="left:44px;top:495px;letter-spacing:-0.12px">Commission group</div>
<svg style="position:absolute;left:10px;top:518px" width="9" height="9" viewBox="0 0 9 9" shape-rendering="crispEdges"><rect x="0.5" y="0.5" width="8" height="8" rx="1" fill="#fafafa" stroke="#8e8e8e"/><rect x="1" y="5" width="7" height="3" fill="#ececec"/><path d="M2 4.5h5" stroke="#3d4fa0" stroke-width="1"/><path d="M4.5 2v5" stroke="#3d4fa0" stroke-width="1"/></svg>
<svg style="position:absolute;left:24px;top:515px" width="16" height="14" viewBox="0 0 16 14" shape-rendering="crispEdges"><rect x="0.5" y="0.5" width="15" height="13" fill="#fff" stroke="#333"/><path d="M0.5 4.5H15.5M0.5 8.5H15.5" stroke="#333"/><rect x="12" y="2" width="2" height="2" fill="#1e90d8"/><rect x="6" y="6" width="2" height="2" fill="#1e90d8"/><rect x="9" y="6" width="2" height="2" fill="#1e90d8"/><rect x="12" y="6" width="2" height="2" fill="#1e90d8"/><rect x="2" y="10" width="2" height="2" fill="#1e90d8"/><rect x="5" y="10" width="2" height="2" fill="#1e90d8"/><rect x="9" y="10" width="2" height="2" fill="#1e90d8"/><rect x="12" y="10" width="2" height="2" fill="#1e90d8"/></svg>
<div class="t k" style="left:44px;top:515px;letter-spacing:-0.12px">Stock</div>
<svg style="position:absolute;left:10px;top:538px" width="9" height="9" viewBox="0 0 9 9" shape-rendering="crispEdges"><rect x="0.5" y="0.5" width="8" height="8" rx="1" fill="#fafafa" stroke="#8e8e8e"/><rect x="1" y="5" width="7" height="3" fill="#ececec"/><path d="M2 4.5h5" stroke="#3d4fa0" stroke-width="1"/></svg>
<svg style="position:absolute;left:24px;top:534px" width="16" height="16" viewBox="0 0 16 16" shape-rendering="crispEdges"><rect x="0.5" y="0.5" width="15" height="15" fill="#fff" stroke="#333"/><rect x="0" y="0" width="16" height="3" fill="#1ea03a"/><rect x="1" y="1" width="14" height="1" fill="#b9e0c0"/><rect x="2" y="5" width="2" height="2" fill="#111"/><rect x="5" y="6" width="2" height="1" fill="#111"/><rect x="9" y="5" width="2" height="2" fill="#111"/><rect x="12" y="6" width="2" height="1" fill="#111"/><rect x="2" y="8" width="2" height="2" fill="#111"/><rect x="5" y="9" width="2" height="1" fill="#111"/><rect x="9" y="8" width="2" height="2" fill="#111"/><rect x="12" y="9" width="2" height="1" fill="#111"/><rect x="2" y="11" width="2" height="2" fill="#111"/><rect x="5" y="12" width="2" height="1" fill="#111"/></svg>
<div class="t k" style="left:44px;top:535px;letter-spacing:-0.12px">Article status</div>
<svg style="position:absolute;left:42px;top:554px" width="16" height="16" viewBox="0 0 16 16" shape-rendering="crispEdges"><path d="M0.5 3.5L3.5 0.5H15.5L12.5 3.5Z" fill="#ffb880" stroke="#d6602a"/><path d="M12.5 3.5L15.5 0.5V12.5L12.5 15.5Z" fill="#ffb880" stroke="#d6602a"/><rect x="0.5" y="3.5" width="12" height="12" fill="#ffc999" stroke="#d6602a"/><path d="M5.5 3.5V7.5H7.5V3.5L10.5 0.5" fill="none" stroke="#555"/><path d="M2.5 11v2M4.5 10.5v1M6.5 11v2" stroke="#333" stroke-width="1"/></svg>
<svg style="position:absolute;left:42px;top:554px" width="16" height="16" viewBox="0 0 16 16"><rect x="9.5" y="8.5" width="6" height="7" fill="#fff" stroke="#333"/><path d="M11 10.5h3M11.5 12v2.5M13.5 12v2.5" stroke="#333"/></svg>
<div class="t k" style="left:62px;top:555px;letter-spacing:-0.12px">Sales product</div>
<svg style="position:absolute;left:42px;top:574px" width="16" height="16" viewBox="0 0 16 16" shape-rendering="crispEdges"><path d="M0.5 3.5L3.5 0.5H15.5L12.5 3.5Z" fill="#ffb880" stroke="#d6602a"/><path d="M12.5 3.5L15.5 0.5V12.5L12.5 15.5Z" fill="#ffb880" stroke="#d6602a"/><rect x="0.5" y="3.5" width="12" height="12" fill="#ffc999" stroke="#d6602a"/><path d="M5.5 3.5V7.5H7.5V3.5L10.5 0.5" fill="none" stroke="#555"/><path d="M2.5 11v2M4.5 10.5v1M6.5 11v2" stroke="#333" stroke-width="1"/></svg>
<svg style="position:absolute;left:42px;top:574px" width="16" height="16" viewBox="0 0 16 16"><circle cx="12" cy="12" r="4.2" fill="#1e8ad8"/><path d="M8 12h8M12 8v8" stroke="#fff" stroke-width="1"/><path d="M9.5 10h5M9.5 14h5" stroke="#5ec8d8" stroke-width="1"/></svg>
<div class="t k" style="left:62px;top:575px;letter-spacing:-0.12px">Purchase order article</div>
<svg style="position:absolute;left:42px;top:594px" width="16" height="16" viewBox="0 0 16 16" shape-rendering="crispEdges"><path d="M0.5 3.5L3.5 0.5H15.5L12.5 3.5Z" fill="#ffb880" stroke="#d6602a"/><path d="M12.5 3.5L15.5 0.5V12.5L12.5 15.5Z" fill="#ffb880" stroke="#d6602a"/><rect x="0.5" y="3.5" width="12" height="12" fill="#ffc999" stroke="#d6602a"/><path d="M5.5 3.5V7.5H7.5V3.5L10.5 0.5" fill="none" stroke="#555"/><path d="M2.5 11v2M4.5 10.5v1M6.5 11v2" stroke="#333" stroke-width="1"/></svg>
<svg style="position:absolute;left:42px;top:594px" width="16" height="16" viewBox="0 0 16 16"><circle cx="12" cy="12" r="3.8" fill="#fff" stroke="#e8323c" stroke-width="1.5"/><path d="M9.5 14.5L14.5 9.5" stroke="#e8323c" stroke-width="1.5"/></svg>
<div class="t k" style="left:62px;top:595px;letter-spacing:-0.12px">Blocked articles</div>
<svg style="position:absolute;left:42px;top:614px" width="16" height="16" viewBox="0 0 16 16" shape-rendering="crispEdges"><path d="M0.5 3.5L3.5 0.5H15.5L12.5 3.5Z" fill="#ffb880" stroke="#d6602a"/><path d="M12.5 3.5L15.5 0.5V12.5L12.5 15.5Z" fill="#ffb880" stroke="#d6602a"/><rect x="0.5" y="3.5" width="12" height="12" fill="#ffc999" stroke="#d6602a"/><path d="M5.5 3.5V7.5H7.5V3.5L10.5 0.5" fill="none" stroke="#555"/><path d="M2.5 11v2M4.5 10.5v1M6.5 11v2" stroke="#333" stroke-width="1"/></svg>
<svg style="position:absolute;left:42px;top:614px" width="16" height="16" viewBox="0 0 16 16"><circle cx="12" cy="10" r="2" fill="#fff" stroke="#1e8ad8"/><path d="M8.5 16L10.5 12H13.5L15.5 16" fill="#fff" stroke="#1e8ad8"/></svg>
<div class="t k" style="left:62px;top:615px;letter-spacing:-0.12px">Order filling</div>
<svg style="position:absolute;left:10px;top:638px" width="9" height="9" viewBox="0 0 9 9" shape-rendering="crispEdges"><rect x="0.5" y="0.5" width="8" height="8" rx="1" fill="#fafafa" stroke="#8e8e8e"/><rect x="1" y="5" width="7" height="3" fill="#ececec"/><path d="M2 4.5h5" stroke="#3d4fa0" stroke-width="1"/></svg>
<svg style="position:absolute;left:24px;top:635px" width="16" height="14" viewBox="0 0 16 14" shape-rendering="crispEdges"><path d="M1.5 5.5V0.5H6.5L8.5 2.5H14.5V5.5" fill="#fff" stroke="#d6602a"/><rect x="1" y="5" width="14" height="9" fill="#ffc999"/><path d="M1.5 5.5H14.5V13.5H1.5Z" fill="none" stroke="#d6602a"/><rect x="0" y="5" width="1" height="2" fill="#e8a040"/><rect x="15" y="5" width="1" height="2" fill="#e8a040"/><rect x="1" y="6" width="1" height="3" fill="#f0b040"/><rect x="14" y="6" width="1" height="3" fill="#f0b040"/></svg>
<div class="t k" style="left:44px;top:635px;letter-spacing:-0.12px">View filter</div>
<div style="position:absolute;left:42px;top:654px;width:15px;height:15px;background:#fff;box-sizing:border-box;border:1px solid #383838"></div>
<div class="t k" style="left:62px;top:655px;letter-spacing:-0.12px">Summarize catalogue</div>
<div style="position:absolute;left:3px;top:746px;width:200px;height:7px;background:#e6e6e6"></div>
<div style="position:absolute;left:85px;top:748px;width:35px;height:2px;background-image:repeating-linear-gradient(90deg,#222 0 2px,transparent 2px 4px)"></div>
<div style="position:absolute;left:3px;top:753px;width:200px;height:94px;background:#000"></div>
<div style="position:absolute;left:3px;top:754px;width:200px;height:30px;background:#1e8532"></div>
<div style="position:absolute;left:3px;top:785px;width:200px;height:30px;background:#1c742d"></div>
<div style="position:absolute;left:3px;top:816px;width:200px;height:30px;background:#1e8532"></div>
<div class="t w" style="left:9px;top:762px;">Artikel</div>
<div class="t w" style="left:9px;top:793px;font-weight:bold;letter-spacing:0;transform:scaleX(1.2);transform-origin:0 0">Items</div>
<div class="t w" style="left:9px;top:824px;">Items2</div>
<div style="position:absolute;left:3px;top:847px;width:200px;height:24px;background:#f6f6f6"></div>
<div style="position:absolute;left:203px;top:153px;width:1395px;height:718px;background:#fff;box-sizing:border-box;border:1px solid #b4b4b4;border-bottom:none"></div>
<div style="position:absolute;left:204px;top:154px;width:1393px;height:22px;background:#f7f7f7"></div>
<div style="position:absolute;left:204px;top:176px;width:1393px;height:1px;background:#b4b4b4"></div>
<div style="position:absolute;left:577px;top:156px;width:1px;height:18px;background:#b4b4b4"></div>
<div style="position:absolute;left:714px;top:156px;width:1px;height:18px;background:#b4b4b4"></div>
<div style="position:absolute;left:1251px;top:156px;width:1px;height:18px;background:#b4b4b4"></div>
<div style="position:absolute;left:1391px;top:156px;width:1px;height:18px;background:#b4b4b4"></div>
<div style="position:absolute;left:1580px;top:156px;width:1px;height:18px;background:#b4b4b4"></div>
<div class="t " style="left:207px;top:158px;color:#404040;letter-spacing:-0.2px">Matchcode</div>
<div class="t " style="left:581px;top:158px;color:#404040;letter-spacing:-0.2px">Article number</div>
<div class="t " style="left:718px;top:158px;color:#404040;letter-spacing:-0.2px">text</div>
<div class="t " style="right:211px;top:158px;color:#404040;letter-spacing:-0.2px">SP1 € / Unit</div>
<div class="t " style="right:22px;top:158px;color:#404040;letter-spacing:-0.2px">PP € / Unit</div>
<svg style="position:absolute;left:562px;top:162px" width="10" height="5" viewBox="0 0 10 5"><path d="M0 5L5 0L10 5z" fill="#8e8e8e"/></svg>
<div style="position:absolute;left:204px;top:177px;width:1376px;height:661px;overflow:hidden">
<div style="position:absolute;left:0;top:0px;width:1376px;height:20px;background:#0078d7"></div>
<div style="position:absolute;left:0;top:20px;width:1376px;height:1px;background:#b4b4b4"></div>
<div class="t" style="left:2px;top:3px;color:#fff;letter-spacing:-0.12px">Bottom slat Standard Alu blank</div>
<div class="t" style="left:514px;top:0px;color:#fff;letter-spacing:-0.12px">Bottom slat Standard Alu blank</div>
<div class="t" style="right:191px;top:3px;color:#fff;letter-spacing:-0.12px">4.80 / m</div>
<div class="t" style="right:2px;top:3px;color:#fff;letter-spacing:-0.12px">3.00 / m</div>
<div style="position:absolute;left:0;top:21px;width:1376px;height:20px;background:#f6f6f6"></div>
<div style="position:absolute;left:0;top:41px;width:1376px;height:1px;background:#b4b4b4"></div>
<div class="t" style="left:2px;top:24px;color:#303030;letter-spacing:-0.12px">Bottom slat Standard Alu brown</div>
<div class="t" style="left:514px;top:21px;color:#303030;letter-spacing:-0.12px">Bottom slat Standard Alu brown</div>
<div class="t" style="right:191px;top:24px;color:#303030;letter-spacing:-0.12px">4.80 / m</div>
<div class="t" style="right:2px;top:24px;color:#303030;letter-spacing:-0.12px">3.00 / m</div>
<div style="position:absolute;left:0;top:42px;width:1376px;height:20px;background:#ffffff"></div>
<div style="position:absolute;left:0;top:62px;width:1376px;height:1px;background:#b4b4b4"></div>
<div class="t" style="left:2px;top:45px;color:#303030;letter-spacing:-0.12px">Bottom slat Standard Alu grey</div>
<div class="t" style="left:514px;top:42px;color:#303030;letter-spacing:-0.12px">Bottom slat Standard Alu grey</div>
<div class="t" style="right:191px;top:45px;color:#303030;letter-spacing:-0.12px">4.80 / m</div>
<div class="t" style="right:2px;top:45px;color:#303030;letter-spacing:-0.12px">3.00 / m</div>
<div style="position:absolute;left:0;top:63px;width:1376px;height:20px;background:#f6f6f6"></div>
<div style="position:absolute;left:0;top:83px;width:1376px;height:1px;background:#b4b4b4"></div>
<div class="t" style="left:2px;top:66px;color:#303030;letter-spacing:-0.12px">Bottom slat Standard Alu white</div>
<div class="t" style="left:514px;top:63px;color:#303030;letter-spacing:-0.12px">Bottom slat Standard Alu white</div>
<div class="t" style="right:191px;top:66px;color:#303030;letter-spacing:-0.12px">4.80 / m</div>
<div class="t" style="right:2px;top:66px;color:#303030;letter-spacing:-0.12px">3.00 / m</div>
<div style="position:absolute;left:0;top:84px;width:1376px;height:20px;background:#ffffff"></div>
<div style="position:absolute;left:0;top:104px;width:1376px;height:1px;background:#b4b4b4"></div>
<div class="t" style="left:2px;top:87px;color:#303030;letter-spacing:-0.12px">Bottom slat Standard PVC beige</div>
<div class="t" style="left:514px;top:84px;color:#303030;letter-spacing:-0.12px">Bottom slat Standard PVC beige</div>
<div class="t" style="right:191px;top:87px;color:#303030;letter-spacing:-0.12px">3.00 / m</div>
<div class="t" style="right:2px;top:87px;color:#303030;letter-spacing:-0.12px">2.00 / m</div>
<div style="position:absolute;left:0;top:105px;width:1376px;height:20px;background:#f6f6f6"></div>
<div style="position:absolute;left:0;top:125px;width:1376px;height:1px;background:#b4b4b4"></div>
<div class="t" style="left:2px;top:108px;color:#303030;letter-spacing:-0.12px">Bottom slat Standard PVC brown</div>
<div class="t" style="left:514px;top:105px;color:#303030;letter-spacing:-0.12px">Bottom slat Standard PVC brown</div>
<div class="t" style="right:191px;top:108px;color:#303030;letter-spacing:-0.12px">3.00 / m</div>
<div class="t" style="right:2px;top:108px;color:#303030;letter-spacing:-0.12px">2.00 / m</div>
<div style="position:absolute;left:0;top:126px;width:1376px;height:20px;background:#ffffff"></div>
<div style="position:absolute;left:0;top:146px;width:1376px;height:1px;background:#b4b4b4"></div>
<div class="t" style="left:2px;top:129px;color:#303030;letter-spacing:-0.12px">Bottom slat Standard PVC dark green</div>
<div class="t" style="left:514px;top:126px;color:#303030;letter-spacing:-0.12px">Bottom slat Standard PVC dark green</div>
<div class="t" style="right:191px;top:129px;color:#303030;letter-spacing:-0.12px">3.00 / m</div>
<div class="t" style="right:2px;top:129px;color:#303030;letter-spacing:-0.12px">2.00 / m</div>
<div style="position:absolute;left:0;top:147px;width:1376px;height:20px;background:#f6f6f6"></div>
<div style="position:absolute;left:0;top:167px;width:1376px;height:1px;background:#b4b4b4"></div>
<div class="t" style="left:2px;top:150px;color:#303030;letter-spacing:-0.12px">Bottom slat Standard PVC grey</div>
<div class="t" style="left:514px;top:147px;color:#303030;letter-spacing:-0.12px">Bottom slat Standard PVC grey</div>
<div class="t" style="right:191px;top:150px;color:#303030;letter-spacing:-0.12px">3.00 / m</div>
<div class="t" style="right:2px;top:150px;color:#303030;letter-spacing:-0.12px">2.00 / m</div>
<div style="position:absolute;left:0;top:168px;width:1376px;height:20px;background:#ffffff"></div>
<div style="position:absolute;left:0;top:188px;width:1376px;height:1px;background:#b4b4b4"></div>
<div class="t" style="left:2px;top:171px;color:#303030;letter-spacing:-0.12px">Bottom slat Standard PVC white</div>
<div class="t" style="left:514px;top:168px;color:#303030;letter-spacing:-0.12px">Bottom slat Standard PVC white</div>
<div class="t" style="right:191px;top:171px;color:#303030;letter-spacing:-0.12px">3.00 / m</div>
<div class="t" style="right:2px;top:171px;color:#303030;letter-spacing:-0.12px">2.00 / m</div>
<div style="position:absolute;left:0;top:189px;width:1376px;height:20px;background:#f6f6f6"></div>
<div style="position:absolute;left:0;top:209px;width:1376px;height:1px;background:#b4b4b4"></div>
<div class="t" style="left:2px;top:192px;color:#303030;letter-spacing:-0.12px">Cover Maxi guide channel half-round Alu beige</div>
<div class="t" style="left:514px;top:189px;color:#303030;letter-spacing:-0.12px">Cover Maxi guide channel half-round Alu beige</div>
<div class="t" style="right:191px;top:192px;color:#303030;letter-spacing:-0.12px">3.00 / m</div>
<div class="t" style="right:2px;top:192px;color:#303030;letter-spacing:-0.12px">2.00 / m</div>
<div style="position:absolute;left:0;top:210px;width:1376px;height:20px;background:#ffffff"></div>
<div style="position:absolute;left:0;top:230px;width:1376px;height:1px;background:#b4b4b4"></div>
<div class="t" style="left:2px;top:213px;color:#303030;letter-spacing:-0.12px">Cover Maxi guide channel half-round Alu blank</div>
<div class="t" style="left:514px;top:210px;color:#303030;letter-spacing:-0.12px">Cover Maxi guide channel half-round Alu blank</div>
<div class="t" style="right:191px;top:213px;color:#303030;letter-spacing:-0.12px">3.00 / m</div>
<div class="t" style="right:2px;top:213px;color:#303030;letter-spacing:-0.12px">2.00 / m</div>
<div style="position:absolute;left:0;top:231px;width:1376px;height:20px;background:#f6f6f6"></div>
<div style="position:absolute;left:0;top:251px;width:1376px;height:1px;background:#b4b4b4"></div>
<div class="t" style="left:2px;top:234px;color:#303030;letter-spacing:-0.12px">Cover Maxi guide channel half-round Alu brown</div>
<div class="t" style="left:514px;top:231px;color:#303030;letter-spacing:-0.12px">Cover Maxi guide channel half-round Alu brown</div>
<div class="t" style="right:191px;top:234px;color:#303030;letter-spacing:-0.12px">3.00 / m</div>
<div class="t" style="right:2px;top:234px;color:#303030;letter-spacing:-0.12px">2.00 / m</div>
<div style="position:absolute;left:0;top:252px;width:1376px;height:20px;background:#ffffff"></div>
<div style="position:absolute;left:0;top:272px;width:1376px;height:1px;background:#b4b4b4"></div>
<div class="t" style="left:2px;top:255px;color:#303030;letter-spacing:-0.12px">Cover Maxi guide channel half-round Alu grey</div>
<div class="t" style="left:514px;top:252px;color:#303030;letter-spacing:-0.12px">Cover Maxi guide channel half-round Alu grey</div>
<div class="t" style="right:191px;top:255px;color:#303030;letter-spacing:-0.12px">3.00 / m</div>
<div class="t" style="right:2px;top:255px;color:#303030;letter-spacing:-0.12px">2.00 / m</div>
<div style="position:absolute;left:0;top:273px;width:1376px;height:20px;background:#f6f6f6"></div>
<div style="position:absolute;left:0;top:293px;width:1376px;height:1px;background:#b4b4b4"></div>
<div class="t" style="left:2px;top:276px;color:#303030;letter-spacing:-0.12px">Cover Maxi guide channel half-round Alu white</div>
<div class="t" style="left:514px;top:273px;color:#303030;letter-spacing:-0.12px">Cover Maxi guide channel half-round Alu white</div>
<div class="t" style="right:191px;top:276px;color:#303030;letter-spacing:-0.12px">3.00 / m</div>
<div class="t" style="right:2px;top:276px;color:#303030;letter-spacing:-0.12px">2.00 / m</div>
<div style="position:absolute;left:0;top:294px;width:1376px;height:20px;background:#ffffff"></div>
<div style="position:absolute;left:0;top:314px;width:1376px;height:1px;background:#b4b4b4"></div>
<div class="t" style="left:2px;top:297px;color:#303030;letter-spacing:-0.12px">Cover Maxi guide channel half-round PVC beige</div>
<div class="t" style="left:514px;top:294px;color:#303030;letter-spacing:-0.12px">Cover Maxi guide channel half-round PVC beige</div>
<div class="t" style="right:191px;top:297px;color:#303030;letter-spacing:-0.12px">2.00 / m</div>
<div class="t" style="right:2px;top:297px;color:#303030;letter-spacing:-0.12px">1.00 / m</div>
<div style="position:absolute;left:0;top:315px;width:1376px;height:20px;background:#f6f6f6"></div>
<div style="position:absolute;left:0;top:335px;width:1376px;height:1px;background:#b4b4b4"></div>
<div class="t" style="left:2px;top:318px;color:#303030;letter-spacing:-0.12px">Cover Maxi guide channel half-round PVC brown</div>
<div class="t" style="left:514px;top:315px;color:#303030;letter-spacing:-0.12px">Cover Maxi guide channel half-round PVC brown</div>
<div class="t" style="right:191px;top:318px;color:#303030;letter-spacing:-0.12px">2.00 / m</div>
<div class="t" style="right:2px;top:318px;color:#303030;letter-spacing:-0.12px">1.00 / m</div>
<div style="position:absolute;left:0;top:336px;width:1376px;height:20px;background:#ffffff"></div>
<div style="position:absolute;left:0;top:356px;width:1376px;height:1px;background:#b4b4b4"></div>
<div class="t" style="left:2px;top:339px;color:#303030;letter-spacing:-0.12px">Cover Maxi guide channel half-round PVC dark green</div>
<div class="t" style="left:514px;top:336px;color:#303030;letter-spacing:-0.12px">Cover Maxi guide channel half-round PVC dark green</div>
<div class="t" style="right:191px;top:339px;color:#303030;letter-spacing:-0.12px">2.00 / m</div>
<div class="t" style="right:2px;top:339px;color:#303030;letter-spacing:-0.12px">1.00 / m</div>
<div style="position:absolute;left:0;top:357px;width:1376px;height:20px;background:#f6f6f6"></div>
<div style="position:absolute;left:0;top:377px;width:1376px;height:1px;background:#b4b4b4"></div>
<div class="t" style="left:2px;top:360px;color:#303030;letter-spacing:-0.12px">Cover Maxi guide channel half-round PVC grey</div>
<div class="t" style="left:514px;top:357px;color:#303030;letter-spacing:-0.12px">Cover Maxi guide channel half-round PVC grey</div>
<div class="t" style="right:191px;top:360px;color:#303030;letter-spacing:-0.12px">2.00 / m</div>
<div class="t" style="right:2px;top:360px;color:#303030;letter-spacing:-0.12px">1.00 / m</div>
<div style="position:absolute;left:0;top:378px;width:1376px;height:20px;background:#ffffff"></div>
<div style="position:absolute;left:0;top:398px;width:1376px;height:1px;background:#b4b4b4"></div>
<div class="t" style="left:2px;top:381px;color:#303030;letter-spacing:-0.12px">Cover Maxi guide channel half-round PVC white</div>
<div class="t" style="left:514px;top:378px;color:#303030;letter-spacing:-0.12px">Cover Maxi guide channel half-round PVC white</div>
<div class="t" style="right:191px;top:381px;color:#303030;letter-spacing:-0.12px">2.00 / m</div>
<div class="t" style="right:2px;top:381px;color:#303030;letter-spacing:-0.12px">1.00 / m</div>
<div style="position:absolute;left:0;top:399px;width:1376px;height:20px;background:#f6f6f6"></div>
<div style="position:absolute;left:0;top:419px;width:1376px;height:1px;background:#b4b4b4"></div>
<div class="t" style="left:2px;top:402px;color:#303030;letter-spacing:-0.12px">Cover Mini guide channel half-round Alu beige</div>
<div class="t" style="left:514px;top:399px;color:#303030;letter-spacing:-0.12px">Cover Mini guide channel half-round Alu beige</div>
<div class="t" style="right:191px;top:402px;color:#303030;letter-spacing:-0.12px">3.00 / m</div>
<div class="t" style="right:2px;top:402px;color:#303030;letter-spacing:-0.12px">2.00 / m</div>
<div style="position:absolute;left:0;top:420px;width:1376px;height:20px;background:#ffffff"></div>
<div style="position:absolute;left:0;top:440px;width:1376px;height:1px;background:#b4b4b4"></div>
<div class="t" style="left:2px;top:423px;color:#303030;letter-spacing:-0.12px">Cover Mini guide channel half-round Alu blank</div>
<div class="t" style="left:514px;top:420px;color:#303030;letter-spacing:-0.12px">Cover Mini guide channel half-round Alu blank</div>
<div class="t" style="right:191px;top:423px;color:#303030;letter-spacing:-0.12px">3.00 / m</div>
<div class="t" style="right:2px;top:423px;color:#303030;letter-spacing:-0.12px">2.00 / m</div>
<div style="position:absolute;left:0;top:441px;width:1376px;height:20px;background:#f6f6f6"></div>
<div style="position:absolute;left:0;top:461px;width:1376px;height:1px;background:#b4b4b4"></div>
<div class="t" style="left:2px;top:444px;color:#303030;letter-spacing:-0.12px">Cover Mini guide channel half-round Alu brown</div>
<div class="t" style="left:514px;top:441px;color:#303030;letter-spacing:-0.12px">Cover Mini guide channel half-round Alu brown</div>
<div class="t" style="right:191px;top:444px;color:#303030;letter-spacing:-0.12px">3.00 / m</div>
<div class="t" style="right:2px;top:444px;color:#303030;letter-spacing:-0.12px">2.00 / m</div>
<div style="position:absolute;left:0;top:462px;width:1376px;height:20px;background:#ffffff"></div>
<div style="position:absolute;left:0;top:482px;width:1376px;height:1px;background:#b4b4b4"></div>
<div class="t" style="left:2px;top:465px;color:#303030;letter-spacing:-0.12px">Cover Mini guide channel half-round Alu grey</div>
<div class="t" style="left:514px;top:462px;color:#303030;letter-spacing:-0.12px">Cover Mini guide channel half-round Alu grey</div>
<div class="t" style="right:191px;top:465px;color:#303030;letter-spacing:-0.12px">3.00 / m</div>
<div class="t" style="right:2px;top:465px;color:#303030;letter-spacing:-0.12px">2.00 / m</div>
<div style="position:absolute;left:0;top:483px;width:1376px;height:20px;background:#f6f6f6"></div>
<div style="position:absolute;left:0;top:503px;width:1376px;height:1px;background:#b4b4b4"></div>
<div class="t" style="left:2px;top:486px;color:#303030;letter-spacing:-0.12px">Cover Mini guide channel half-round Alu white</div>
<div class="t" style="left:514px;top:483px;color:#303030;letter-spacing:-0.12px">Cover Mini guide channel half-round Alu white</div>
<div class="t" style="right:191px;top:486px;color:#303030;letter-spacing:-0.12px">3.00 / m</div>
<div class="t" style="right:2px;top:486px;color:#303030;letter-spacing:-0.12px">2.00 / m</div>
<div style="position:absolute;left:0;top:504px;width:1376px;height:20px;background:#ffffff"></div>
<div style="position:absolute;left:0;top:524px;width:1376px;height:1px;background:#b4b4b4"></div>
<div class="t" style="left:2px;top:507px;color:#303030;letter-spacing:-0.12px">Cover Mini guide channel half-round PVC beige</div>
<div class="t" style="left:514px;top:504px;color:#303030;letter-spacing:-0.12px">Cover Mini guide channel half-round PVC beige</div>
<div class="t" style="right:191px;top:507px;color:#303030;letter-spacing:-0.12px">2.00 / m</div>
<div class="t" style="right:2px;top:507px;color:#303030;letter-spacing:-0.12px">1.00 / m</div>
<div style="position:absolute;left:0;top:525px;width:1376px;height:20px;background:#f6f6f6"></div>
<div style="position:absolute;left:0;top:545px;width:1376px;height:1px;background:#b4b4b4"></div>
<div class="t" style="left:2px;top:528px;color:#303030;letter-spacing:-0.12px">Cover Mini guide channel half-round PVC brown</div>
<div class="t" style="left:514px;top:525px;color:#303030;letter-spacing:-0.12px">Cover Mini guide channel half-round PVC brown</div>
<div class="t" style="right:191px;top:528px;color:#303030;letter-spacing:-0.12px">2.00 / m</div>
<div class="t" style="right:2px;top:528px;color:#303030;letter-spacing:-0.12px">1.00 / m</div>
<div style="position:absolute;left:0;top:546px;width:1376px;height:20px;background:#ffffff"></div>
<div style="position:absolute;left:0;top:566px;width:1376px;height:1px;background:#b4b4b4"></div>
<div class="t" style="left:2px;top:549px;color:#303030;letter-spacing:-0.12px">Cover Mini guide channel half-round PVC dark green</div>
<div class="t" style="left:514px;top:546px;color:#303030;letter-spacing:-0.12px">Cover Mini guide channel half-round PVC dark green</div>
<div class="t" style="right:191px;top:549px;color:#303030;letter-spacing:-0.12px">2.00 / m</div>
<div class="t" style="right:2px;top:549px;color:#303030;letter-spacing:-0.12px">1.00 / m</div>
<div style="position:absolute;left:0;top:567px;width:1376px;height:20px;background:#f6f6f6"></div>
<div style="position:absolute;left:0;top:587px;width:1376px;height:1px;background:#b4b4b4"></div>
<div class="t" style="left:2px;top:570px;color:#303030;letter-spacing:-0.12px">Cover Mini guide channel half-round PVC grey</div>
<div class="t" style="left:514px;top:567px;color:#303030;letter-spacing:-0.12px">Cover Mini guide channel half-round PVC grey</div>
<div class="t" style="right:191px;top:570px;color:#303030;letter-spacing:-0.12px">2.00 / m</div>
<div class="t" style="right:2px;top:570px;color:#303030;letter-spacing:-0.12px">1.00 / m</div>
<div style="position:absolute;left:0;top:588px;width:1376px;height:20px;background:#ffffff"></div>
<div style="position:absolute;left:0;top:608px;width:1376px;height:1px;background:#b4b4b4"></div>
<div class="t" style="left:2px;top:591px;color:#303030;letter-spacing:-0.12px">Cover Mini guide channel half-round PVC white</div>
<div class="t" style="left:514px;top:588px;color:#303030;letter-spacing:-0.12px">Cover Mini guide channel half-round PVC white</div>
<div class="t" style="right:191px;top:591px;color:#303030;letter-spacing:-0.12px">2.00 / m</div>
<div class="t" style="right:2px;top:591px;color:#303030;letter-spacing:-0.12px">1.00 / m</div>
<div style="position:absolute;left:0;top:609px;width:1376px;height:20px;background:#f6f6f6"></div>
<div style="position:absolute;left:0;top:629px;width:1376px;height:1px;background:#b4b4b4"></div>
<div class="t" style="left:2px;top:612px;color:#303030;letter-spacing:-0.12px">Kink crank 45°</div>
<div class="t" style="left:514px;top:609px;color:#303030;letter-spacing:-0.12px">Kink crank 45°</div>
<div class="t" style="right:191px;top:612px;color:#303030;letter-spacing:-0.12px">24.00 / Stück</div>
<div class="t" style="right:2px;top:612px;color:#303030;letter-spacing:-0.12px">18.00 / Stück</div>
<div style="position:absolute;left:0;top:630px;width:1376px;height:20px;background:#ffffff"></div>
<div style="position:absolute;left:0;top:650px;width:1376px;height:1px;background:#b4b4b4"></div>
<div class="t" style="left:2px;top:633px;color:#303030;letter-spacing:-0.12px">Maxi guide channel Alu beige</div>
<div class="t" style="left:514px;top:630px;color:#303030;letter-spacing:-0.12px">Maxi guide channel Alu beige</div>
<div class="t" style="right:191px;top:633px;color:#303030;letter-spacing:-0.12px">5.00 / m</div>
<div class="t" style="right:2px;top:633px;color:#303030;letter-spacing:-0.12px">4.00 / m</div>
<div style="position:absolute;left:0;top:651px;width:1376px;height:20px;background:#f6f6f6"></div>
<div style="position:absolute;left:0;top:671px;width:1376px;height:1px;background:#b4b4b4"></div>
<div class="t" style="left:2px;top:654px;color:#303030;letter-spacing:-0.12px">Maxi guide channel Alu blank</div>
<div class="t" style="left:514px;top:651px;color:#303030;letter-spacing:-0.12px">Maxi guide channel Alu blank</div>
<div class="t" style="right:191px;top:654px;color:#303030;letter-spacing:-0.12px">5.00 / m</div>
<div class="t" style="right:2px;top:654px;color:#303030;letter-spacing:-0.12px">4.00 / m</div>
<div style="position:absolute;left:373px;top:0;width:1px;height:661px;background:#b4b4b4"></div>
<div style="position:absolute;left:510px;top:0;width:1px;height:661px;background:#b4b4b4"></div>
<div style="position:absolute;left:1047px;top:0;width:1px;height:661px;background:#b4b4b4"></div>
<div style="position:absolute;left:1187px;top:0;width:1px;height:661px;background:#b4b4b4"></div>
</div>
<div style="position:absolute;left:1580px;top:177px;width:17px;height:661px;background:#f0f0f0"></div>
<div style="position:absolute;left:1581px;top:177px;width:15px;height:661px;background:#fff;box-sizing:border-box;border-left:1px solid #b4b4b4;border-right:1px solid #b4b4b4"></div>
<div style="position:absolute;left:1581px;top:178px;width:15px;height:16px;background:#fff;box-sizing:border-box;border:1px solid #b4b4b4"></div>
<div style="position:absolute;left:1581px;top:821px;width:15px;height:16px;background:#fff;box-sizing:border-box;border:1px solid #b4b4b4"></div>
<svg style="position:absolute;left:1585px;top:183px" width="8" height="4" viewBox="0 0 8 4"><path d="M0 4L4 0L8 4z" fill="#707070"/></svg>
<svg style="position:absolute;left:1585px;top:828px" width="8" height="4" viewBox="0 0 8 4"><path d="M0 0L4 4L8 0z" fill="#707070"/></svg>
<div style="position:absolute;left:203px;top:838px;width:1395px;height:33px;background:#efefef;box-sizing:border-box;border-left:1px solid #b4b4b4;border-right:1px solid #b4b4b4;border-top:1px solid #d0d0d0"></div>
<div style="position:absolute;left:211px;top:848px;width:14px;height:14px;background:#fff;box-sizing:border-box;border:1px solid #aaa"></div>
<svg style="position:absolute;left:213px;top:851px" width="10" height="8" viewBox="0 0 10 8"><path d="M1 4L4 7L9 1" fill="none" stroke="#8a8a8a" stroke-width="1.3"/></svg>
<div class="t " style="right:14px;top:849px;letter-spacing:-0.15px">Edit Filter</div>
<div style="position:absolute;left:0px;top:871px;width:1600px;height:29px;background:#f6f6f6"></div>
<div style="position:absolute;left:124px;top:871px;width:1476px;height:1px;background:#c8c8c8"></div>
<div style="position:absolute;left:124px;top:871px;width:1px;height:25px;background:#c8c8c8"></div>
<div style="position:absolute;left:2px;top:871px;width:1px;height:25px;background:#c8c8c8"></div>
<div style="position:absolute;left:2px;top:895px;width:123px;height:2px;background:#a8a8a8"></div>
<div class="t " style="left:14px;top:877px;letter-spacing:0">Article [155 / 14368]</div>
<div class="t " style="left:134px;top:877px;letter-spacing:-0.2px">Simple curtain</div>
<div style="position:absolute;left:211px;top:877px;width:1px;height:18px;background:#d0d0d0"></div>
<svg style="position:absolute;left:1584px;top:884px" width="8" height="4" viewBox="0 0 8 4"><path d="M0 0h8l-4 4z" fill="#555"/></svg>
<div style="position:absolute;left:557px;top:357px;width:486px;height:178px;box-shadow:0 0 12px 2px rgba(0,0,0,0.28)"></div>
<div style="position:absolute;left:557px;top:357px;width:486px;height:178px;background:#fff;box-sizing:border-box;border:1px solid #9a9a9a"></div>
<div style="position:absolute;left:558px;top:484px;width:484px;height:50px;background:#f0f0f0"></div>
<div class="t" style="left:566px;top:366px;font-size:12px;color:#8c8c8c;letter-spacing:0">ingenious</div>
<svg style="position:absolute;left:1022px;top:367px" width="10" height="10" viewBox="0 0 10 10"><path d="M0.5 0.5L9.5 9.5M9.5 0.5L0.5 9.5" stroke="#666" stroke-width="1.05"/></svg>
<div class="t" style="left:623px;top:415px;font-size:12px;line-height:15px;color:#000;letter-spacing:-0.05px">Question: Do you really want to delete the directory Product</div>
<div class="t" style="left:623px;top:430px;font-size:12px;line-height:15px;color:#000;letter-spacing:-0.05px">catalogue\EN\01_Demo_Shutter\Shutter\Parts? All included items will be</div>
<div class="t" style="left:623px;top:445px;font-size:12px;line-height:15px;color:#000;letter-spacing:-0.05px">moved to the directory level above.</div>
<svg style="position:absolute;left:574px;top:410px" width="40" height="40" viewBox="0 0 40 40"><g fill="none" stroke="#eb8732" stroke-width="1.2" stroke-linejoin="round">
<path d="M12 5.5 H30 C32 5.5 33.2 8 33.8 10 C34 10.8 33.6 11.5 33 11.5 H15.4 C14.6 9.5 14.2 5.7 12 5.5 C8.5 5.5 6.2 8.5 6.3 11.5 C6.4 15.5 10.5 20 12.3 26"/>
<path d="M27.7 11.5 L32.6 23.5 C34.6 28.5 32.5 34.5 28.5 34.5 H10.8"/>
<path d="M12.3 26.2 H5.2 C4.4 26.2 4.4 27.5 4.8 29 C5.6 31.8 8 34.5 10.8 34.5 C13.2 34 13.6 29.5 12.3 26.2"/>
</g>
<g stroke="#6e6e6e" stroke-width="1.1"><path d="M12.3 16.5h12.6M13.9 19.5h12.8M15.2 22.5h12.6M16.2 25.5h12.6M17 28.5h12.8"/></g></svg>
<div style="position:absolute;left:849px;top:498px;width:86px;height:24px;background:#e1e1e1;box-sizing:border-box;border:2px solid #0078d7"></div>
<div style="position:absolute;left:946px;top:498px;width:86px;height:24px;background:#e1e1e1;box-sizing:border-box;border:1px solid #adadad"></div>
<div class="t" style="left:849px;width:86px;text-align:center;top:503px;font-size:12px;color:#000;letter-spacing:0">Yes</div>
<div class="t" style="left:946px;width:86px;text-align:center;top:503px;font-size:12px;color:#000;letter-spacing:0">No</div>
</body></html>
